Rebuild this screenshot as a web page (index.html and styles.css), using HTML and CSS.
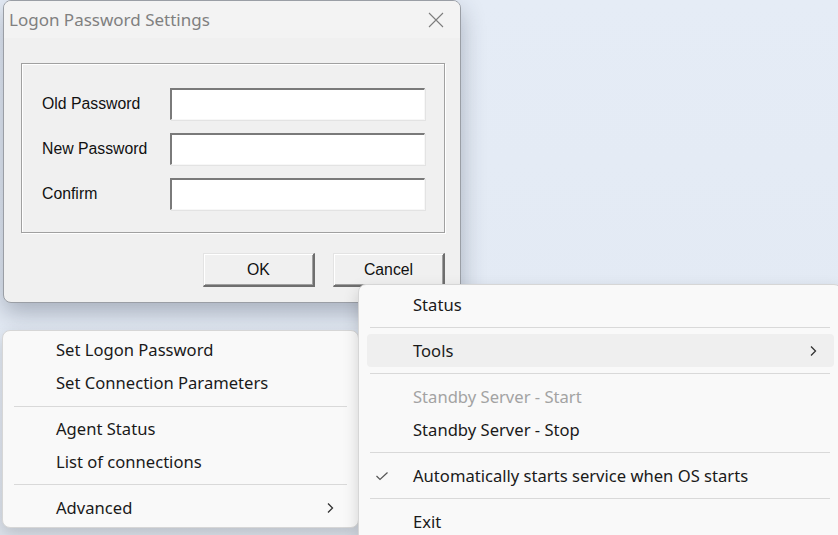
FILE: index.html
```html
<!DOCTYPE html>
<html>
<head>
<meta charset="utf-8">
<link rel="stylesheet" href="styles.css">
</head>
<body>
<div class="desktop">
  <div class="dialog">
    <div class="titlebar">
      <span class="title">Logon Password Settings</span>
      <svg class="close" width="16" height="16" viewBox="0 0 16 16"><path d="M1 1L15 15M15 1L1 15" stroke="#7d7d7d" stroke-width="1.1" fill="none"/></svg>
    </div>
    <div class="dlg-body">
      <div class="group">
        <div class="row"><span class="lbl">Old Password</span><input class="field" type="password"></div>
        <div class="row"><span class="lbl">New Password</span><input class="field" type="password"></div>
        <div class="row"><span class="lbl">Confirm</span><input class="field" type="password"></div>
      </div>
      <div class="buttons">
        <button class="btn">OK</button>
        <button class="btn">Cancel</button>
      </div>
    </div>
  </div>

  <div class="menu menu-left">
    <div class="item"><span class="txt">Set Logon Password</span></div>
    <div class="item"><span class="txt">Set Connection Parameters</span></div>
    <div class="sep"></div>
    <div class="item"><span class="txt">Agent Status</span></div>
    <div class="item"><span class="txt">List of connections</span></div>
    <div class="sep"></div>
    <div class="item"><span class="txt">Advanced</span>
      <svg class="chev" width="8" height="12" viewBox="0 0 8 12"><path d="M2 1.5L6.5 6L2 10.5" stroke="#333" stroke-width="1.3" fill="none"/></svg>
    </div>
  </div>

  <div class="menu menu-right">
    <div class="item"><span class="txt">Status</span></div>
    <div class="sep"></div>
    <div class="item hot"><span class="txt">Tools</span>
      <svg class="chev" width="8" height="12" viewBox="0 0 8 12"><path d="M2 1.5L6.5 6L2 10.5" stroke="#333" stroke-width="1.3" fill="none"/></svg>
    </div>
    <div class="sep"></div>
    <div class="item disabled"><span class="txt">Standby Server - Start</span></div>
    <div class="item"><span class="txt">Standby Server - Stop</span></div>
    <div class="sep"></div>
    <div class="item"><svg class="check" width="14" height="10" viewBox="0 0 14 10"><path d="M1.5 5L5 8.5L12.5 1.5" stroke="#555" stroke-width="1.2" fill="none"/></svg><span class="txt">Automatically starts service when OS starts</span></div>
    <div class="sep"></div>
    <div class="item"><span class="txt">Exit</span></div>
  </div>
</div>
</body>
</html>
```

FILE: styles.css
```css
html, body {
  margin: 0;
  padding: 0;
  width: 838px;
  height: 535px;
  overflow: hidden;
}
body {
  background: linear-gradient(180deg, #e5ecf6 0%, #e3eaf4 60%, #dde3ec 100%);
}
.desktop {
  position: relative;
  width: 838px;
  height: 535px;
}

/* ---------- dialog ---------- */
.dialog {
  position: absolute;
  left: 3px;
  top: 0;
  width: 456px;
  height: 301px;
  border: 1px solid #9a9ea5;
  border-radius: 8px;
  background: #f0f0f0;
  box-shadow: 0 10px 24px rgba(40, 50, 70, 0.32);
  overflow: hidden;
  display: flex;
  flex-direction: column;
}
.titlebar {
  height: 37px;
  background: #f3f3f3;
  display: flex;
  align-items: center;
  padding: 0 16px 0 5px;
}
.title {
  flex: 1;
  font-family: "Noto Sans", sans-serif;
  font-size: 17px;
  color: #808080;
  margin-top: -1px;
}
.dlg-body {
  flex: 1;
  padding: 25px 15px 0 17px;
  display: flex;
  flex-direction: column;
}
.group {
  border: 1px solid #a0a0a0;
  box-shadow: inset 1px 1px 0 #ffffff, 1px 1px 0 #ffffff;
  padding: 24px 19px 0 20px;
  box-sizing: content-box;
  display: flex;
  flex-direction: column;
  gap: 13px;
  width: 383px;
  height: 144px;
}
.row {
  display: flex;
  align-items: center;
  height: 32px;
}
.lbl {
  width: 128px;
  font-family: "Liberation Sans", Arial, sans-serif;
  font-size: 15.8px;
  color: #111;
}
.field {
  width: 255px;
  height: 32px;
  box-sizing: border-box;
  margin: 0;
  padding: 0;
  background: #fff;
  border-style: solid;
  border-width: 2px 1px 1px 2px;
  border-color: #7a7a7a #f7f7f7 #f7f7f7 #7a7a7a;
  box-shadow: 1px 1px 0 #e3e3e3;
  outline: none;
}
.buttons {
  display: flex;
  justify-content: flex-end;
  gap: 18px;
  margin-top: 20px;
  width: 424px;
}
.btn {
  width: 112px;
  height: 34px;
  margin: 0;
  padding: 0;
  background: #f0f0f0;
  border-style: solid;
  border-width: 1px 2px 2px 1px;
  border-color: #e3e3e3 #6e6e6e #6e6e6e #e3e3e3;
  box-shadow: inset 1px 1px 0 #ffffff, inset -1px -1px 0 #a0a0a0;
  font-family: "Liberation Sans", Arial, sans-serif;
  font-size: 15.8px;
  color: #111;
}

/* ---------- menus ---------- */
.menu {
  position: absolute;
  background: #f9f9f9;
  border: 1px solid #d6d6d6;
  border-radius: 8px;
  box-shadow: 0 6px 16px rgba(0, 0, 0, 0.16);
  display: flex;
  flex-direction: column;
  padding: 3px 0 3px 0;
  font-family: "Noto Sans", sans-serif;
  font-size: 16.6px;
  color: #1a1a1a;
}
.menu-left {
  left: 2px;
  top: 330px;
  width: 355px;
  height: 190px;
  z-index: 2;
}
.menu-left .item {
  padding-left: 45px;
}
.menu-right {
  left: 358px;
  top: 284px;
  width: 482px;
  height: 260px;
  z-index: 3;
}
.item {
  height: 33px;
  display: flex;
  align-items: center;
  position: relative;
  margin: 0 7px 0 8px;
  border-radius: 4px;
  padding-left: 46px;
  padding-right: 17px;
}
.item .txt {
  flex: 1;
  margin-top: -1px;
}
.item.hot {
  background: #efefef;
}
.item.disabled {
  color: #a3a3a3;
}
.sep {
  height: 1px;
  background: #d9d9d9;
  margin: 6px 11px 6px 11px;
}
.check {
  position: absolute;
  left: 8px;
  top: 12px;
}
.chev {
  flex: none;
}
```
